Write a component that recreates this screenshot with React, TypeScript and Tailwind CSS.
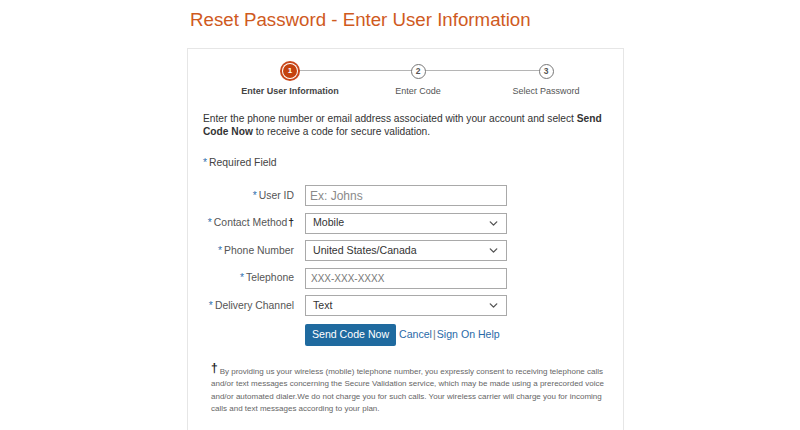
import { ChevronDown } from "lucide-react";

const steps = [
  { n: 1, label: "Enter User Information", active: true },
  { n: 2, label: "Enter Code", active: false },
  { n: 3, label: "Select Password", active: false },
];

function Req() {
  return <span className="text-[#2f6fae] mr-[2px]">*</span>;
}

function SelectBox({ value }: { value: string }) {
  return (
    <div className="w-[202px] h-[21px] border border-[#a9a9a9] bg-white flex items-center justify-between pl-[7px] pr-[6px] text-[10.6px] text-[#333]">
      <span>{value}</span>
      <ChevronDown size={13} strokeWidth={2.5} className="text-[#555]" />
    </div>
  );
}

export default function App() {
  return (
    <div className="min-h-screen w-[800px] h-[430px] overflow-hidden bg-white font-['Liberation_Sans',Arial,sans-serif]">
      <div className="ml-[187px] w-[437px]">
        {/* Title */}
        <h1 className="pl-[3px] pt-[8px] h-[48px] text-[18.7px] leading-[24px] text-[#cf5a1e]">
          Reset Password - Enter User Information
        </h1>

        {/* Panel */}
        <div className="border border-[#e6e6e6] h-[400px] pl-[15px] pr-[6px]">
          {/* Stepper */}
          <div className="relative ml-[23px] w-[384px] grid grid-cols-3 pt-[12px]">
            <div className="absolute top-[21px] left-[64px] right-[64px] h-px bg-[#b5b5b5]" />
            {steps.map((s) => (
              <div key={s.n} className="relative flex flex-col items-center">
                <div className="h-[20px] flex items-center justify-center">
                  {s.active ? (
                    <div className="w-[20px] h-[20px] rounded-full bg-[#c9471b] flex items-center justify-center">
                      <div className="w-[16px] h-[16px] rounded-full bg-white flex items-center justify-center">
                        <div className="w-[14px] h-[14px] rounded-full bg-[#c4420f] text-white text-[8px] font-bold flex items-center justify-center">
                          1
                        </div>
                      </div>
                    </div>
                  ) : (
                    <div className="w-[15px] h-[15px] rounded-full border border-[#777] bg-white text-[#555] text-[8.5px] font-bold flex items-center justify-center">
                      {s.n}
                    </div>
                  )}
                </div>
                <span
                  className={`mt-[4px] text-[9px] leading-[12px] ${
                    s.active ? "font-bold text-[#444]" : "text-[#555]"
                  }`}
                >
                  {s.label}
                </span>
              </div>
            ))}
          </div>

          {/* Intro */}
          <p className="mt-[15px] text-[10.2px] leading-[13px] text-[#333]">
            Enter the phone number or email address associated with your account and select <b>Send</b>{" "}
            <b>Code Now</b> to receive a code for secure validation.
          </p>

          <p className="mt-[18px] text-[10.4px] leading-[13px] text-[#444]">
            <Req />
            Required Field
          </p>

          {/* Form */}
          <div className="mt-[16px] grid grid-cols-[91px_202px] gap-x-[11px] gap-y-[6.6px] items-center text-[10.4px] text-[#555]">
            <label className="text-right">
              <Req />User ID
            </label>
            <div className="h-[21px] border border-[#a9a9a9] flex items-center pl-[4px] text-[12px] text-[#8a8a8a]">
              Ex: Johns
            </div>

            <label className="text-right whitespace-nowrap">
              <Req />Contact Method<span className="font-bold text-[#222] ml-[1px]">†</span>
            </label>
            <SelectBox value="Mobile" />

            <label className="text-right">
              <Req />Phone Number
            </label>
            <SelectBox value="United States/Canada" />

            <label className="text-right">
              <Req />Telephone
            </label>
            <div className="h-[21px] border border-[#a9a9a9] flex items-center pl-[5px] text-[10px] text-[#777]">
              XXX-XXX-XXXX
            </div>

            <label className="text-right whitespace-nowrap">
              <Req />Delivery Channel
            </label>
            <SelectBox value="Text" />

            <div />
            <div className="flex items-center mt-[1px] text-[10.6px] whitespace-nowrap">
              <button className="h-[22px] w-[91px] rounded-[2px] bg-[#1f6a9f] text-white text-[10.6px]">
                Send Code Now
              </button>
              <span className="ml-[3px] text-[#2a6aa8]">Cancel</span>
              <span className="text-[#777] mx-[1px]">|</span>
              <span className="text-[#2a6aa8]">Sign On Help</span>
            </div>
          </div>

          {/* Footnote */}
          <p className="mt-[17px] pl-[8px] text-[8px] leading-[12.5px] text-[#666]">
            <span className="inline-block align-[2px] mr-[2px] text-[12px] leading-[10px] font-bold text-[#222]">†</span>
            <span>By providing us your wireless (mobile) telephone number, you expressly consent to receiving telephone calls</span>{" "}
            <span>
              and/or text messages concerning the Secure Validation service, which may be made using a prerecorded voice and/or automated dialer.We do not charge you for such calls. Your wireless carrier will charge you for incoming calls and text messages according to your plan.
            </span>
          </p>
        </div>
      </div>
    </div>
  );
}
